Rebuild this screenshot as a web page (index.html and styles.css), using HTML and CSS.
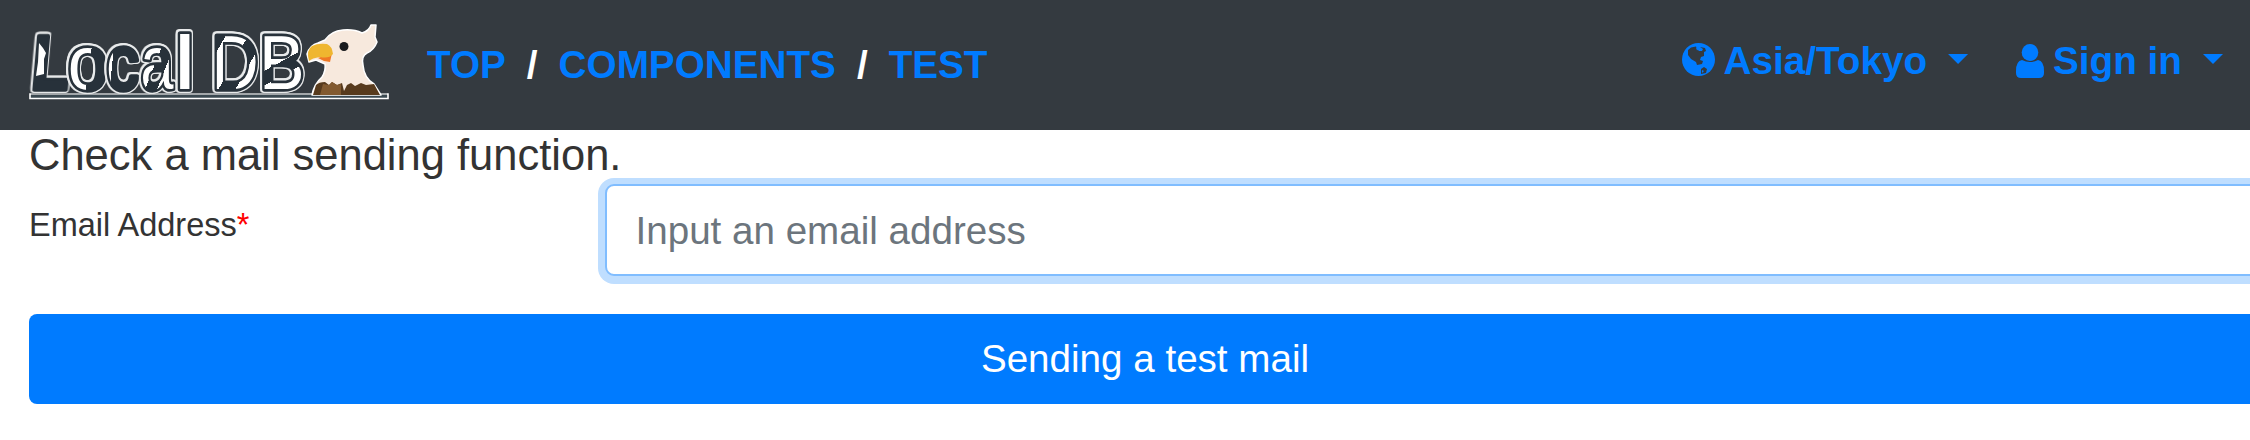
FILE: index.html
```html
<!DOCTYPE html>
<html lang="en">
<head>
<meta charset="utf-8">
<title>Local DB</title>
<link rel="stylesheet" href="styles.css">
</head>
<body>
<header class="navbar">
  <a class="brand" href="#">
    <svg class="logo" viewBox="28 20 364 84" role="img" aria-label="Local DB">
      <defs>
        <linearGradient id="patch" x1="0" y1="0" x2="1" y2="1">
          <stop offset=".24" stop-color="#27313a"/><stop offset=".24" stop-color="#fff"/>
          <stop offset=".48" stop-color="#fff"/><stop offset=".48" stop-color="#27313a"/>
          <stop offset=".66" stop-color="#27313a"/><stop offset=".66" stop-color="#fff"/>
        </linearGradient>
        <linearGradient id="round" x1="0" y1="0" x2="1" y2=".3">
          <stop offset=".64" stop-color="#fff"/><stop offset=".64" stop-color="#27313a"/>
        </linearGradient>
        <linearGradient id="side" x1="0" y1="0" x2="1" y2=".25">
          <stop offset=".3" stop-color="#fff"/><stop offset=".3" stop-color="#27313a"/>
        </linearGradient>
        <linearGradient id="bee" x1="0" y1="0" x2=".3" y2="1">
          <stop offset=".58" stop-color="#fff"/><stop offset=".58" stop-color="#27313a"/>
          <stop offset=".74" stop-color="#27313a"/><stop offset=".74" stop-color="#fff"/>
        </linearGradient>
      </defs>
      <path d="M30 94H388V98.5H30Z" fill="#3a4850" stroke="#fff" stroke-width="1.6"/>
      <path d="M31 94H387" stroke="#a3a7aa" stroke-width="2"/>
      <g class="lettering">
        <text class="glyph heavy dark" transform="translate(30.500 89) skewX(-5) scale(.8 1)">L</text>
        <text class="glyph round" transform="translate(67.800 89) scale(.94 1)">o</text>
        <text class="glyph side" transform="translate(106 89) scale(.86 1)">c</text>
        <text class="glyph patch" transform="translate(140.500 89) scale(.78 1)">a</text>
        <text class="glyph heavy white" transform="translate(175.500 89) scale(.88 1)">l</text>
        <text class="glyph patch" transform="translate(211.500 89) scale(.86 1)">D</text>
        <text class="glyph bee" transform="translate(259 89) scale(.9 1)">B</text>
      </g>
      <path d="M39 43 43 48 46 53 44 59 44 74 36 76 38 62Z" fill="#fff"/>
      <g>
        <path d="M312 95Q314 84 322 77Q326 71 325 64L316 60 309 62 307 54Q310 45 318 43L325 40Q331 31 343 30Q354 29 362 33Q369 31 371 25L376 25 375 37 377 42Q374 50 367 53Q361 56 363 65Q364 78 374 84L381 95Z" fill="#f7e9dd" stroke="#fff" stroke-width="1.5" stroke-linejoin="round"/>
        <path d="M313 95 316 85Q319 82 325 82L329 85 332 82 337 85 342 83 344 91 347 85 351 83 355 86 361 83 366 85 374 84 380 95Z" fill="#583b1d"/>
        <path d="M320 95 323 84 329 85 332 82 337 85 341 84 341 95Z" fill="#825a30"/>
        <path d="M318 58 332 53 330 62 324 61Z" fill="#ef7925"/>
        <path d="M309 61Q306 50 312 46Q318 43 327 44Q332 46 333 54Q329 59 320 57Q312 58 309 61Z" fill="#efb62f"/>
        <circle cx="344" cy="46.500" r="4.500" fill="#191b1e"/>
      </g>
    </svg>
  </a>
  <nav class="crumbs">
    <a href="#">TOP</a><span class="slash">/</span><a href="#">COMPONENTS</a><span class="slash">/</span><a href="#">TEST</a>
  </nav>
  <div class="menus">
    <a class="menu zone" href="#">
      <svg class="globe" viewBox="0 0 33 33"><circle cx="16.500" cy="16.500" r="16.500" fill="#007bff"/><path d="M6 7 9 4.500 14 3.500 15 6 17 8 20 8 21 6 18 4 23 5 24 8 22 9 22 13 19 14 18 17 21 18 20 21 15 22 14 19 9 16 6 12Z" fill="#343a40"/><path d="M19 26 22 24 25 26 24 30 19 31Z" fill="#343a40"/><path d="M14 4.500 17 5.500 15 7.500ZM20 27 22 28 20 30Z" fill="#007bff"/></svg>
      <span>Asia/Tokyo</span><i class="caret"></i>
    </a>
    <a class="menu login" href="#">
      <svg class="user" viewBox="0 0 28 34"><ellipse cx="14" cy="8.500" rx="8.300" ry="8.500" fill="#007bff"/><path d="M6 16Q14 20 22 16Q28 17 28 27V29Q28 34 23 34H5Q0 34 0 29V27Q0 17 6 16Z" fill="#007bff"/></svg>
      <span>Sign in</span><i class="caret"></i>
    </a>
  </div>
</header>
<main class="page">
  <h1 class="title">Check a mail sending function.</h1>
  <form class="form">
    <div class="row">
      <label class="label" for="email">Email Address<span class="required">*</span></label>
      <input class="field" id="email" type="text" placeholder="Input an email address">
    </div>
    <button class="submit" type="button">Sending a test mail</button>
  </form>
</main>
</body>
</html>
```

FILE: styles.css
```css
* { box-sizing: border-box; }
body {
  margin: 0;
  overflow: hidden;
  background: #fff;
  color: #333;
  font-family: "Liberation Sans", Arial, sans-serif;
}
a { color: #007bff; text-decoration: none; }
.navbar {
  display: flex;
  align-items: flex-start;
  height: 130px;
  padding: 20px 27px 0 28px;
  background: #343a40;
  font-size: 38.7px;
  font-weight: 700;
  line-height: 46px;
}
.logo { display: block; width: 364px; height: 84px; overflow: visible; }
.glyph {
  font-size: 76px;
  font-weight: 400;
  stroke: #27313a;
  stroke-width: 5.5px;
  stroke-linejoin: round;
  filter: drop-shadow(1.2px 0 0 #e8eaeb) drop-shadow(-1.2px 0 0 #e8eaeb) drop-shadow(0 1.2px 0 #e8eaeb) drop-shadow(0 -1.2px 0 #e8eaeb);
  paint-order: stroke;
}
.heavy { font-weight: 700; }
.dark { fill: #27313a; }
.white { fill: #fff; }
.patch { fill: url(#patch); }
.round { fill: url(#round); }
.side { fill: url(#side); }
.bee { fill: url(#bee); }
.crumbs {
  display: flex;
  gap: 21px;
  padding: 22px 0 0 35px;
}
.slash { color: #fff; }
.menus { display: flex; gap: 48px; margin-left: auto; padding-top: 18px; }
.menu { display: flex; }
.globe { width: 33px; height: 33px; margin: 5px 9px 0 0; }
.user { width: 28px; height: 34px; margin: 6px 9px 0 0; }
.caret {
  width: 20px;
  height: 10px;
  margin: 16px 0 0 21px;
  background: #007bff;
  clip-path: polygon(0 0, 100% 0, 50% 100%);
}
.page { width: 2261px; padding-left: 29px; }
.title {
  height: 54px;
  margin: 0;
  font-size: 43.5px;
  font-weight: 400;
  line-height: 50px;
}
.row { display: flex; height: 92px; }
.label { width: 576px; padding-top: 22px; font-size: 32.5px; line-height: 38px; }
.required { color: #f00; }
.field {
  width: 1656px;
  height: 92px;
  padding: 2px 28.5px 0;
  border: 2px solid #80bdff;
  border-radius: 9px;
  outline: none;
  box-shadow: 0 1px 0 7px #bfdeff;
  color: #495057;
  font: 38.6px "Liberation Sans", Arial, sans-serif;
}
.field::placeholder { color: #6c757d; opacity: 1; }
.submit {
  display: block;
  width: 100%;
  height: 90px;
  margin-top: 38px;
  padding: 0;
  border: 0;
  border-radius: 8px;
  background: #007bff;
  color: #fff;
  font: 38.6px "Liberation Sans", Arial, sans-serif;
}
```
